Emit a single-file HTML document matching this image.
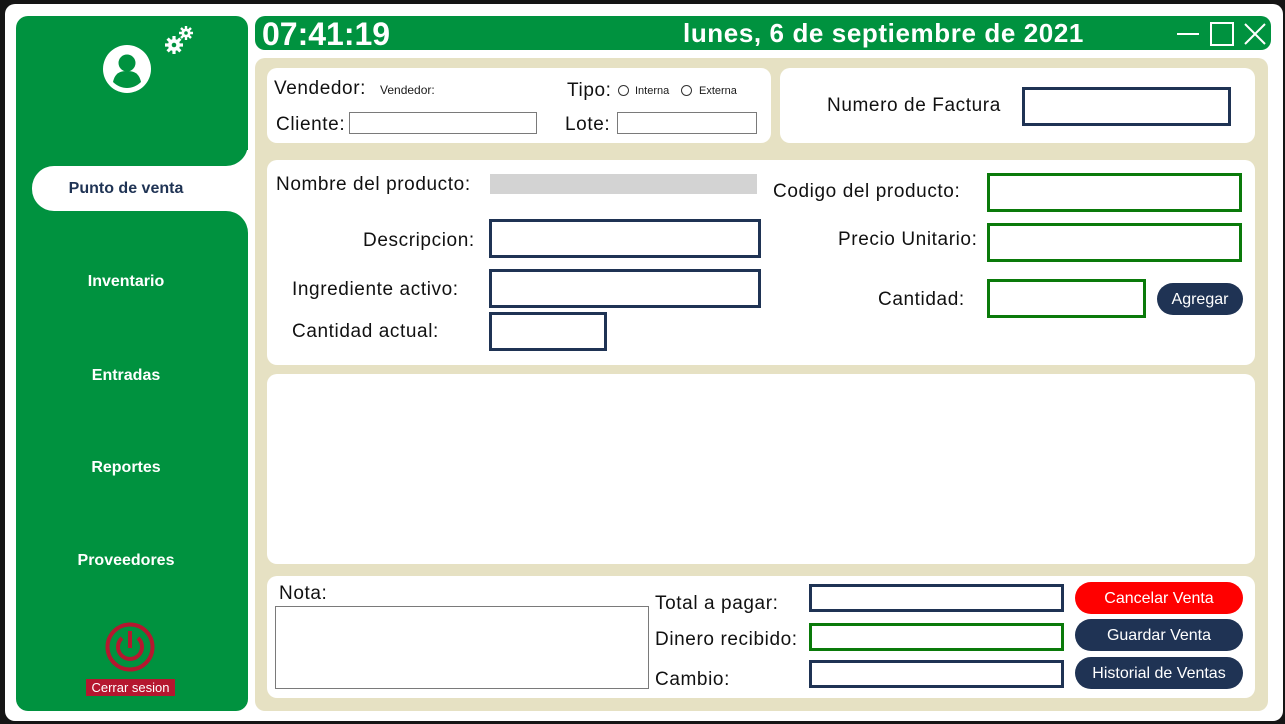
<!DOCTYPE html>
<html><head><meta charset="utf-8"><style>
*{margin:0;padding:0;box-sizing:border-box}
body{width:1285px;height:724px;background:#151515;position:relative;overflow:hidden;font-family:"Liberation Sans",sans-serif;color:#1a1a1a}
.a{position:absolute}
.win{left:5px;top:4px;width:1278px;height:717px;background:#fff;border-radius:10px}
.side{left:16px;top:16px;width:232px;height:695px;background:#00923f;border-radius:12px;overflow:hidden}
.nav{position:absolute;left:0;width:220px;text-align:center;color:#fff;font-weight:bold;font-size:16px}
.hdr{left:255px;top:16px;width:1016px;height:34px;background:#00923f;border-radius:10px}
.beige{left:255px;top:58px;width:1013px;height:653px;background:#e6e1c3;border-radius:10px}
.p{background:#fff;border-radius:10px}
.l{font-size:19px;color:#111;white-space:nowrap;letter-spacing:0.6px}
.bx{border:3px solid #1f3354;background:#fff}
.gx{border:3px solid #0a7a0a;background:#fff}
.tb{border:1px solid #7a7a7a;background:#fff}
.btn{border-radius:16px;color:#fff;font-size:16px;text-align:center;line-height:32px}
</style></head><body>
<div class="a win"></div>
<div class="a side">
  <svg class="a" style="left:86px;top:28px" width="50" height="50" viewBox="0 0 50 50"><circle cx="25" cy="25" r="24" fill="#fff"/><circle cx="25" cy="19" r="8.5" fill="#00923f"/><path d="M11 38c2-9 7-11 14-11s12 2 14 11c-4 4-9 6-14 6s-10-2-14-6z" fill="#00923f"/></svg>
  <svg class="a" style="left:148px;top:8px" width="34" height="32" viewBox="0 0 34 32"><g fill="#fff"><circle cx="10" cy="21" r="6"/><g stroke="#fff" stroke-width="3.2"><path d="M10 12v18M1 21h18M3.6 14.6l12.8 12.8M3.6 27.4l12.8-12.8"/></g><circle cx="10" cy="21" r="2.3" fill="#00923f"/><circle cx="22" cy="9" r="4.5"/><g stroke="#fff" stroke-width="2.4"><path d="M22 2v14M15 9h14M17 4l10 10M17 14l10-10"/></g><circle cx="22" cy="9" r="1.8" fill="#00923f"/></g></svg>
  <div class="a" style="left:200px;top:134px;width:32px;height:90px;background:#fff"></div>
  <div class="a" style="left:160px;top:120px;width:72px;height:30px;background:#00923f;border-bottom-right-radius:22px"></div>
  <div class="a" style="left:160px;top:195px;width:72px;height:40px;background:#00923f;border-top-right-radius:22px"></div>
  <div class="a" style="left:16px;top:150px;width:216px;height:45px;background:#fff;border-radius:22px 0 0 22px"></div>
  <div class="nav" style="top:164px;color:#1f3354;left:0">Punto de venta</div>
  <div class="nav" style="top:257px">Inventario</div>
  <div class="nav" style="top:351px">Entradas</div>
  <div class="nav" style="top:443px">Reportes</div>
  <div class="nav" style="top:536px">Proveedores</div>
  <svg class="a" style="left:89px;top:606px" width="50" height="50" viewBox="0 0 50 50"><circle cx="25" cy="25" r="22.5" fill="none" stroke="#b5172f" stroke-width="4"/><path d="M17 16a12 12 0 1 0 16 0" fill="none" stroke="#b5172f" stroke-width="4"/><path d="M25 9v17" stroke="#b5172f" stroke-width="4"/></svg>
  <div class="a" style="left:70px;top:663px;width:89px;height:17px;background:#b5172f;color:#fff;font-size:13px;text-align:center;line-height:17px">Cerrar sesion</div>
</div>
<div class="a hdr">
  <div class="a" style="left:7px;top:0;color:#fff;font-weight:bold;font-size:32px;line-height:37px">07:41:19</div>
  <div class="a" style="left:428px;top:0;color:#fff;font-weight:bold;font-size:26px;line-height:34px;letter-spacing:0.6px">lunes, 6 de septiembre de 2021</div>
  <div class="a" style="left:922px;top:17px;width:22px;height:2px;background:#fff"></div>
  <div class="a" style="left:955px;top:6px;width:24px;height:24px;border:2px solid #fff"></div>
  <svg class="a" style="left:988px;top:6px" width="24" height="24"><path d="M2 2L22 22M22 2L2 22" stroke="#fff" stroke-width="2"/></svg>
</div>
<div class="a beige"></div>
<div class="a p" style="left:267px;top:68px;width:504px;height:75px"></div>
<div class="a p" style="left:780px;top:68px;width:475px;height:75px"></div>
<div class="a p" style="left:267px;top:160px;width:988px;height:205px"></div>
<div class="a p" style="left:267px;top:374px;width:988px;height:190px"></div>
<div class="a p" style="left:267px;top:576px;width:988px;height:122px"></div>

<div class="a l" style="left:274px;top:78px">Vendedor:</div>
<div class="a" style="left:380px;top:83px;font-size:12px">Vendedor:</div>
<div class="a l" style="left:276px;top:114px">Cliente:</div>
<div class="a tb" style="left:349px;top:112px;width:188px;height:22px"></div>
<div class="a l" style="left:567px;top:80px">Tipo:</div>
<div class="a" style="left:618px;top:85px;width:11px;height:11px;border:1px solid #333;border-radius:50%"></div>
<div class="a" style="left:635px;top:85px;font-size:11px">Interna</div>
<div class="a" style="left:681px;top:85px;width:11px;height:11px;border:1px solid #333;border-radius:50%"></div>
<div class="a" style="left:699px;top:85px;font-size:11px">Externa</div>
<div class="a l" style="left:565px;top:114px">Lote:</div>
<div class="a tb" style="left:617px;top:112px;width:140px;height:22px"></div>
<div class="a l" style="left:827px;top:95px">Numero de Factura</div>
<div class="a bx" style="left:1022px;top:87px;width:209px;height:39px"></div>

<div class="a l" style="left:276px;top:174px">Nombre del producto:</div>
<div class="a" style="left:490px;top:174px;width:267px;height:20px;background:#d3d3d3"></div>
<div class="a l" style="left:363px;top:230px">Descripcion:</div>
<div class="a bx" style="left:489px;top:219px;width:272px;height:39px"></div>
<div class="a l" style="left:292px;top:279px">Ingrediente activo:</div>
<div class="a bx" style="left:489px;top:269px;width:272px;height:39px"></div>
<div class="a l" style="left:292px;top:321px">Cantidad actual:</div>
<div class="a bx" style="left:489px;top:312px;width:118px;height:39px"></div>
<div class="a l" style="left:773px;top:181px">Codigo del producto:</div>
<div class="a gx" style="left:987px;top:173px;width:255px;height:39px"></div>
<div class="a l" style="left:838px;top:229px">Precio Unitario:</div>
<div class="a gx" style="left:987px;top:223px;width:255px;height:39px"></div>
<div class="a l" style="left:878px;top:289px">Cantidad:</div>
<div class="a gx" style="left:987px;top:279px;width:159px;height:39px"></div>
<div class="a btn" style="left:1157px;top:283px;width:86px;height:32px;background:#1f3354;line-height:33px">Agregar</div>

<div class="a l" style="left:279px;top:583px">Nota:</div>
<div class="a tb" style="left:275px;top:606px;width:374px;height:83px"></div>
<div class="a l" style="left:655px;top:593px">Total a pagar:</div>
<div class="a l" style="left:655px;top:629px">Dinero recibido:</div>
<div class="a l" style="left:655px;top:669px">Cambio:</div>
<div class="a bx" style="left:809px;top:584px;width:255px;height:28px"></div>
<div class="a gx" style="left:809px;top:623px;width:255px;height:28px"></div>
<div class="a bx" style="left:809px;top:660px;width:255px;height:28px"></div>
<div class="a btn" style="left:1075px;top:582px;width:168px;height:32px;background:#ff0000;line-height:34px">Cancelar Venta</div>
<div class="a btn" style="left:1075px;top:619px;width:168px;height:32px;background:#1f3354;line-height:34px">Guardar Venta</div>
<div class="a btn" style="left:1075px;top:657px;width:168px;height:32px;background:#1f3354;line-height:34px">Historial de Ventas</div>
</body></html>
